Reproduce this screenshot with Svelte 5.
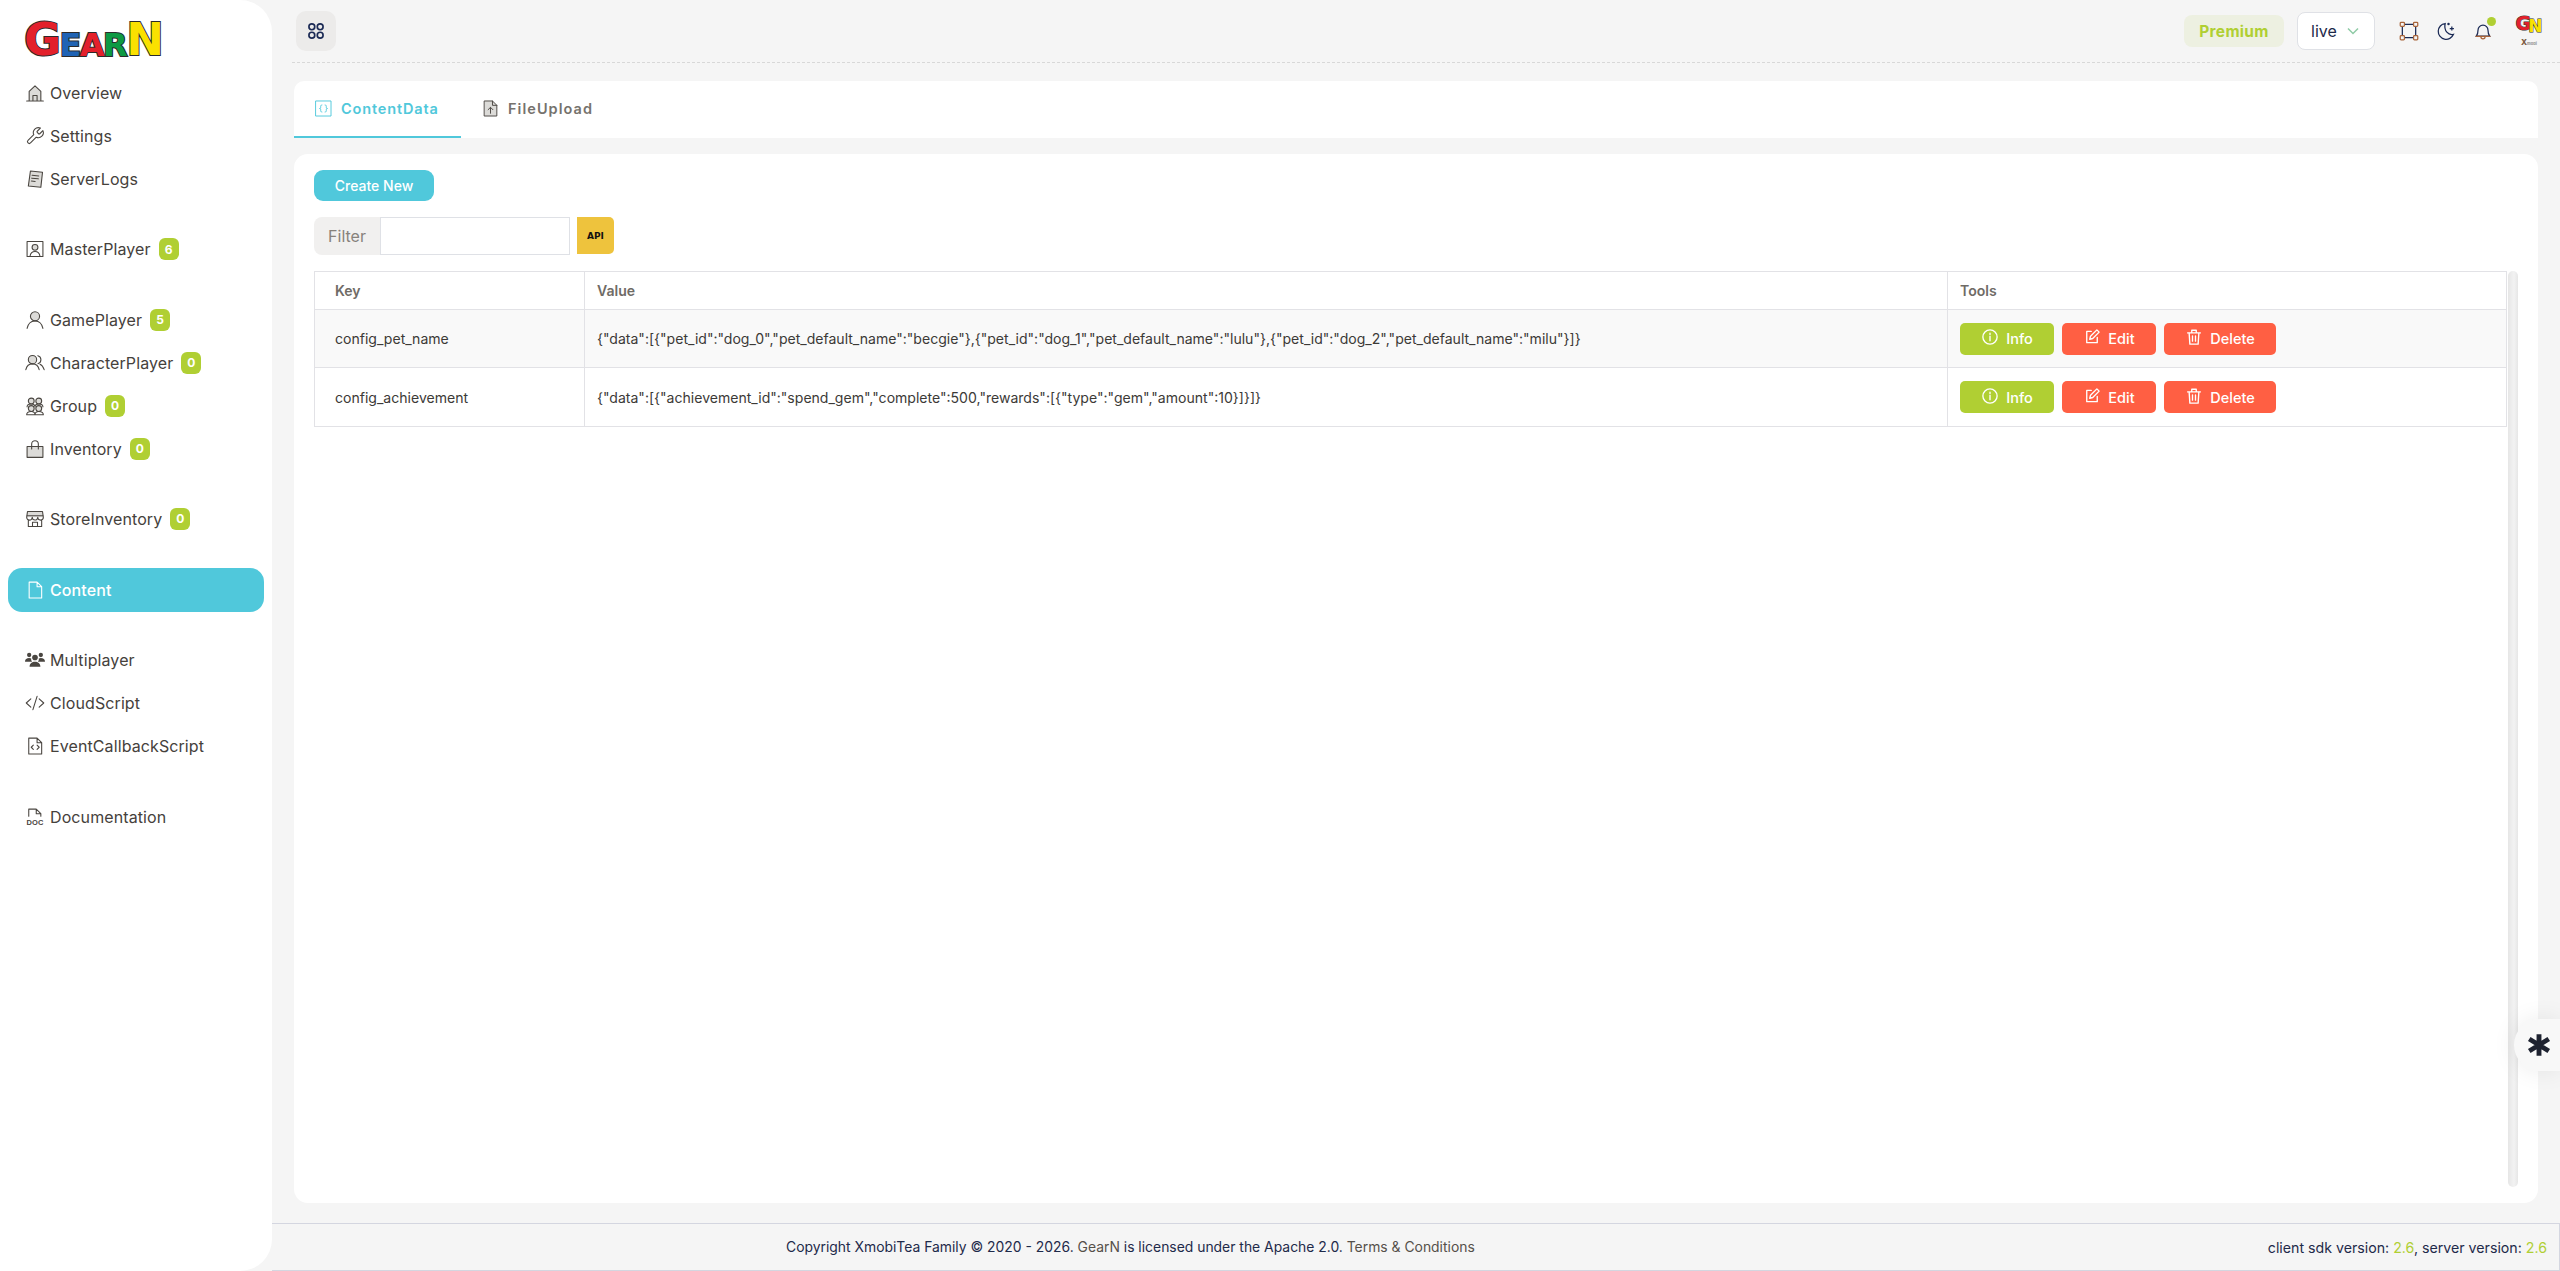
<script lang="ts">
	const icons: Record<string, string> = {
		home: '<path class="fill" d="M5 21V10l7-6.500L19 10v11z"/><path d="M2 21.500h20M5 21V10l7-6.500L19 10v11M9.500 21v-6h5v6"/>',
		wrench: '<path d="M14.700 6.300a1 1 0 0 0 0 1.400l1.600 1.600a1 1 0 0 0 1.400 0l3.770-3.770a6 6 0 0 1-7.940 7.940l-6.910 6.910a2.120 2.120 0 0 1-3-3l6.910-6.910a6 6 0 0 1 7.940-7.940z"/>',
		logs: '<path class="fill" d="M6.500 2.500 21 4l-2 18-15-1.500z"/><path d="M6.500 2.500 21 4l-2 18-15-1.500zM8.500 7.500l8 .8M8 11l8 .8M7.700 14.500l4.500.5"/>',
		master: '<rect x="2.500" y="3" width="19" height="18"/><circle class="fill" cx="12" cy="10" r="3.500"/><circle cx="12" cy="10" r="3.500"/><path d="M6 21c.5-4 3-6 6-6s5.500 2 6 6"/>',
		user: '<circle class="fill" cx="12" cy="7.500" r="5.500"/><circle cx="12" cy="7.500" r="5.500"/><path d="M2.500 22c1-5.500 5-9 9.500-9s8.500 3.500 9.500 9"/>',
		users: '<circle class="fill" cx="9" cy="8" r="5"/><circle cx="9" cy="8" r="5"/><path d="M1 20c1-4.500 4-7 8-7s7 2.500 8 7M15.500 3.200a5 5 0 0 1 0 9.600M18 13.500c2.500 1 4 3.500 5 6.500"/>',
		group: '<g class="fill"><circle cx="7.500" cy="6" r="3.500"/><circle cx="16.500" cy="6" r="3.500"/><circle cx="7.500" cy="15" r="3.500"/><circle cx="16.500" cy="15" r="3.500"/></g><circle cx="7.500" cy="6" r="3.500"/><circle cx="16.500" cy="6" r="3.500"/><circle cx="7.500" cy="15" r="3.500"/><circle cx="16.500" cy="15" r="3.500"/><path d="M2.500 13c0-2 2-3.500 5-3.500s4.500 1.500 4.500 3.500c0-2 1.500-3.500 4.500-3.500s5 1.500 5 3.500M2 22.500c0-2.500 2-4 5.500-4s4.500 1.500 4.500 4c0-2.500 1-4 4.500-4s5.500 1.500 5.500 4z"/>',
		bag: '<path class="fill" d="M2.500 9h19v13h-19z"/><path d="M2.500 9h19v13h-19zM8 12V6a4 4 0 0 1 8 0v6"/>',
		store: '<path class="fill" d="M3 3h18l1 7H2z"/><path d="M3 3h18l1 7a3.300 3.300 0 0 1-6.700 0 3.300 3.300 0 0 1-6.600 0A3.300 3.300 0 0 1 2 10zM2 8h20M4 13v8h16v-8M9 21v-5h6v5"/>',
		file: '<path d="M5 2.500h9.500L20 8v13.500H5zM14.500 2.500V8H20"/>',
		code: '<path d="M7 7l-5.500 5L7 17M17 7l5.500 5L17 17M14.500 4l-5 16"/>',
		filecode: '<path d="M4.500 2.500h10L20 8v13.500H4.500zM14.500 2.500V8H20M10 11l-2.500 2.500L10 16M14.500 11l2.500 2.500-2.500 2.500"/>',
		grid: '<circle cx="7" cy="7" r="3.500"/><circle cx="17" cy="7" r="3.500"/><circle cx="7" cy="17" r="3.500"/><circle cx="17" cy="17" r="3.500"/>',
		braces: '<rect x="2.500" y="2.500" width="19" height="19"/><path d="M10 7.500c-2 0-1.500 1.500-1.500 3 0 1-.5 1.500-1.500 1.500 1 0 1.500.5 1.500 1.500 0 1.500-.5 3 1.500 3M14 7.500c2 0 1.500 1.500 1.500 3 0 1 .5 1.500 1.500 1.500-1 0-1.500.5-1.500 1.500 0 1.500.5 3-1.500 3"/>',
		upload: '<path class="fill" d="M4.500 2.500h10L20 8v13.500H4.500z"/><path d="M4.500 2.500h10L20 8v13.500H4.500zM14.500 2.500V8H20M12 18v-7M9 13.500l3-3 3 3"/>',
		info: '<circle cx="12" cy="12" r="9.500"/><path d="M12 11v6M12 7v1.500"/>',
		edit: '<path d="M11 4.500H5v15h14v-7M9 15l1-4 8.500-8.500 3 3L13 14z"/>',
		trash: '<path d="M3.500 6.500h17M9 6.500V3h6v3.500M5.500 6.500l1 15h11l1-15M10 10.500v7M14 10.500v7"/>'
	};

	const groups = [
		[
			{ label: 'Overview', icon: 'home' },
			{ label: 'Settings', icon: 'wrench' },
			{ label: 'ServerLogs', icon: 'logs' }
		],
		[{ label: 'MasterPlayer', icon: 'master', badge: 6 }],
		[
			{ label: 'GamePlayer', icon: 'user', badge: 5 },
			{ label: 'CharacterPlayer', icon: 'users', badge: 0 },
			{ label: 'Group', icon: 'group', badge: 0 },
			{ label: 'Inventory', icon: 'bag', badge: 0 }
		],
		[{ label: 'StoreInventory', icon: 'store', badge: 0 }],
		[{ label: 'Content', icon: 'file', active: true }],
		[
			{ label: 'Multiplayer', icon: 'multi' },
			{ label: 'CloudScript', icon: 'code' },
			{ label: 'EventCallbackScript', icon: 'filecode' }
		],
		[{ label: 'Documentation', icon: 'doc' }]
	];

	const rows = [
		{
			key: 'config_pet_name',
			value: '{"data":[{"pet_id":"dog_0","pet_default_name":"becgie"},{"pet_id":"dog_1","pet_default_name":"lulu"},{"pet_id":"dog_2","pet_default_name":"milu"}]}'
		},
		{
			key: 'config_achievement',
			value: '{"data":[{"achievement_id":"spend_gem","complete":500,"rewards":[{"type":"gem","amount":10}]}]}'
		}
	];
</script>

{#snippet icon(name: string, cls = '')}
	<svg class="icon {cls}" viewBox="0 0 24 24" aria-hidden="true">{@html icons[name]}</svg>
{/snippet}

<div class="shell">
	<aside class="sidebar">
		<div class="logo"><span class="red big">G</span><span class="blue">E</span><span class="red">A</span><span class="green">R</span><span class="yellow big">N</span></div>
		<nav>
			{#each groups as group}
				<ul class="group">
					{#each group as item}
						<li class="item" class:active={item.active}>
							{#if item.icon === 'multi'}
								<svg class="icon solid" viewBox="0 0 24 20" aria-hidden="true">
									<circle cx="5" cy="4" r="2.600" /><circle cx="19" cy="4" r="2.600" /><circle cx="12" cy="7" r="3.400" />
									<path d="M0 12c0-3 2-4.500 5-4.500 1 0 1.800.2 2.500.6-.4 1.500.2 3 1 3.900H0zM24 12c0-3-2-4.500-5-4.500-1 0-1.800.2-2.500.6.400 1.500-.2 3-1 3.900H24zM5.500 18c0-4 3-6 6.500-6s6.500 2 6.500 6z" />
								</svg>
							{:else if item.icon === 'doc'}
								<svg class="icon" viewBox="0 0 24 24" aria-hidden="true">
									<path d="M4.500 11V2.500h9L19 8v3M13.500 2.500V8H19" />
									<text x="12" y="22" text-anchor="middle" class="doc">DOC</text>
								</svg>
							{:else}
								{@render icon(item.icon)}
							{/if}
							<span class="label">{item.label}</span>
							{#if item.badge !== undefined}
								<span class="badge">{item.badge}</span>
							{/if}
						</li>
					{/each}
				</ul>
			{/each}
		</nav>
	</aside>

	<div class="main">
		<header class="topbar">
			<button class="menu-btn">{@render icon('grid', 'navy')}</button>
			<div class="top-right">
				<span class="premium">Premium</span>
				<div class="env">
					<span>live</span>
					<svg class="chev" viewBox="0 0 12 8" aria-hidden="true"><path d="M1 1.500l5 5 5-5" /></svg>
				</div>
				<svg class="top-icon" viewBox="0 0 24 24" aria-hidden="true">
					<path class="navy-line" d="M6.500 4h11M6.500 20h11M4 6.500v11M20 6.500v11" />
					<g class="orange-line"><rect x="1.500" y="1.500" width="5" height="5" rx="1" /><rect x="17.500" y="1.500" width="5" height="5" rx="1" /><rect x="1.500" y="17.500" width="5" height="5" rx="1" /><rect x="17.500" y="17.500" width="5" height="5" rx="1" /></g>
				</svg>
				<svg class="top-icon" viewBox="0 0 24 24" aria-hidden="true">
					<path class="navy-line" d="M11 3a9.500 9.500 0 1 0 10 13c-6 1.500-12-4-10-13z" />
					<path class="navy-line" d="M19 6.500v5M16.500 9h5" />
					<circle cx="15" cy="3.500" r="1.500" fill="#1b2a55" />
				</svg>
				<div class="bell">
					<svg class="top-icon" viewBox="0 0 24 24" aria-hidden="true">
						<path class="navy-line" d="M4 18c1.500-2 2-3.500 2-7a6 6 0 0 1 12 0c0 3.500.5 5 2 7z" />
						<path class="orange-line" d="M3 18.500h18M9.500 19a2.500 2.500 0 0 0 5 0" />
					</svg>
					<span class="dot"></span>
				</div>
				<div class="avatar">
					<div class="avatar-letters"><span class="g">G</span><span class="n">N</span></div>
					<div class="avatar-sub">X<small>mobi</small></div>
				</div>
			</div>
		</header>

		<div class="tabs">
			<div class="tab on">{@render icon('braces')}<span>ContentData</span></div>
			<div class="tab">{@render icon('upload')}<span>FileUpload</span></div>
		</div>

		<section class="card">
			<button class="create">Create New</button>
			<div class="filter-row">
				<div class="filter">
					<span class="filter-label">Filter</span>
					<input class="filter-input" type="text" />
				</div>
				<button class="api">API</button>
			</div>
			<div class="table-area">
				<div class="table-wrap">
					<table>
						<thead>
							<tr><th class="c-key">Key</th><th class="c-val">Value</th><th class="c-tools">Tools</th></tr>
						</thead>
						<tbody>
							{#each rows as row}
								<tr>
									<td class="c-key">{row.key}</td>
									<td class="c-val">{row.value}</td>
									<td class="c-tools">
										<div class="tools">
											<button class="btn lime">{@render icon('info')}Info</button>
											<button class="btn coral">{@render icon('edit')}Edit</button>
											<button class="btn coral wide">{@render icon('trash')}Delete</button>
										</div>
									</td>
								</tr>
							{/each}
						</tbody>
					</table>
				</div>
				<div class="scroll-thumb"></div>
			</div>
		</section>

		<footer class="footer">
			<div class="copy">Copyright XmobiTea Family © 2020 - 2026. <span class="soft">GearN</span> is licensed under the Apache 2.0. <span class="soft">Terms &amp; Conditions</span></div>
			<div class="versions">client sdk version: <b>2.6</b>, server version: <b>2.6</b></div>
		</footer>
	</div>

	<button class="float" aria-label="assistant">
		<svg viewBox="0 0 24 24" aria-hidden="true"><path d="M12 2v20M3 6.500l18 11M3 17.500l18-11" /></svg>
	</button>
</div>

<style>
	:global(body) {
		margin: 0;
		background: #f5f5f5;
		font-family: Inter, "Noto Sans", sans-serif;
	}

	.shell {
		display: grid;
		grid-template-columns: 272px 1fr;
		height: 1271px;
		overflow: hidden;
		color: #45413c;
	}

	.sidebar {
		background: #fff;
		border-radius: 0 32px 32px 0;
		padding: 24px 8px 0;
		box-sizing: border-box;
	}

	.logo {
		display: flex;
		align-items: flex-end;
		height: 34px;
		padding-left: 16px;
		margin-bottom: 13.500px;
		font-family: "DejaVu Sans", sans-serif;
		font-weight: 700;
		font-size: 32px;
		line-height: 26px;
		-webkit-text-stroke: 2px #2b2b2b;
		paint-order: stroke fill;
	}

	.logo span {
		display: block;
		margin-right: -1.500px;
	}

	.logo .big {
		font-size: 45px;
		line-height: 36px;
	}

	.red { color: #e3202b; }
	.blue { color: #1f63b5; }
	.green { color: #0d9a44; }
	.yellow { color: #fae100; }

	nav {
		display: flex;
		flex-direction: column;
		gap: 27.250px;
	}

	.group {
		list-style: none;
		margin: 0;
		padding: 0;
	}

	.item {
		display: flex;
		align-items: center;
		height: 43px;
		padding-left: 17px;
		font-size: 16px;
		letter-spacing: 0.1px;
	}

	.item .icon {
		width: 20px;
		height: 20px;
		margin-right: 5px;
		flex: none;
	}

	.item.active {
		height: 44px;
		background: #50c8db;
		color: #fff;
		font-weight: 500;
		border-radius: 14px;
	}

	.item.active .icon :global(path) {
		stroke: #fff;
	}

	.badge {
		display: flex;
		align-items: center;
		justify-content: center;
		width: 20px;
		height: 22px;
		margin-left: 8px;
		border-radius: 6px;
		background: #b0cf33;
		color: #fff;
		font-size: 12px;
		font-weight: 700;
		letter-spacing: 0;
	}

	.icon {
		fill: none;
		stroke: #4a4641;
		stroke-width: 1.300;
		stroke-linejoin: round;
		stroke-linecap: round;
	}

	.icon :global(.fill) {
		fill: #dcdbd8;
		stroke: none;
	}

	.icon.solid {
		fill: #4a4641;
		stroke: none;
	}

	.doc {
		font-family: "Liberation Sans", sans-serif;
		font-size: 9px;
		font-weight: 700;
		fill: #4a4641;
		stroke: none;
	}

	.main {
		display: flex;
		flex-direction: column;
		min-width: 0;
		height: 1271px;
	}

	.topbar {
		display: flex;
		align-items: center;
		justify-content: space-between;
		box-sizing: border-box;
		height: 63px;
		margin-left: 20px;
		margin-bottom: 18px;
		padding: 0 16px 0 4px;
		border-bottom: 1px dashed #d8d8d8;
		flex: none;
	}

	.menu-btn {
		display: flex;
		align-items: center;
		justify-content: center;
		width: 40px;
		height: 40px;
		padding: 0;
		border: none;
		border-radius: 10px;
		background: #ecebea;
	}

	.menu-btn .icon {
		width: 20px;
		height: 20px;
		stroke: #1b2a55;
		stroke-width: 2;
	}

	.top-right {
		display: flex;
		align-items: center;
	}

	.premium {
		display: flex;
		align-items: center;
		justify-content: center;
		width: 100px;
		height: 32px;
		margin-right: 13px;
		border-radius: 8px;
		background: #edf0e1;
		color: #b0cf33;
		font-size: 15.500px;
		font-weight: 700;
		letter-spacing: 0.3px;
	}

	.env {
		display: flex;
		align-items: center;
		justify-content: space-between;
		box-sizing: border-box;
		width: 78px;
		height: 38px;
		margin-right: 24px;
		padding: 0 15px 0 13px;
		border: 1px solid #dfe1e6;
		border-radius: 8px;
		background: #fff;
		color: #1e2a4a;
		font-size: 16px;
	}

	.chev {
		width: 12px;
		height: 8px;
		fill: none;
		stroke: #8fcba6;
		stroke-width: 1.500;
	}

	.top-icon {
		display: block;
		width: 20px;
		height: 20px;
		margin-right: 17px;
		fill: none;
	}

	.navy-line {
		fill: none;
		stroke: #1b2a55;
		stroke-width: 1.500;
	}

	.orange-line {
		fill: none;
		stroke: #a8643a;
		stroke-width: 1.500;
	}

	.bell {
		position: relative;
	}

	.dot {
		position: absolute;
		top: -4px;
		right: 14px;
		width: 9px;
		height: 9px;
		border-radius: 50%;
		background: #b0cf33;
	}

	.avatar {
		width: 32px;
		margin-left: 3px;
		margin-right: -1px;
		text-align: center;
	}

	.avatar-letters {
		display: flex;
		justify-content: center;
		font-family: "DejaVu Sans", sans-serif;
		font-weight: 700;
		font-size: 19px;
		line-height: 18px;
		-webkit-text-stroke: 1px #333;
		paint-order: stroke fill;
	}

	.avatar-letters .g { color: #e3202b; }
	.avatar-letters .n { color: #fae100; margin-left: -3px; margin-top: 3px; font-size: 17px; }

	.avatar-sub {
		font-size: 8px;
		line-height: 8px;
		margin-top: 3px;
		font-weight: 800;
		color: #7b5a3d;
	}

	.avatar-sub small {
		font-size: 4px;
		color: #999;
	}

	.tabs {
		display: flex;
		flex: none;
		height: 57px;
		margin: 0 22px;
		background: #fff;
		border-radius: 10px 10px 0 0;
	}

	.tab {
		display: flex;
		align-items: center;
		gap: 8px;
		box-sizing: border-box;
		padding: 0 20px 3px;
		color: #76726d;
		font-size: 14.500px;
		font-weight: 600;
		letter-spacing: 1.050px;
	}

	.tab .icon {
		width: 19px;
		height: 19px;
		stroke-width: 1.200;
	}

	.tab.on {
		width: 167px;
		color: #50c8db;
		border-bottom: 2px solid #50c8db;
		padding-bottom: 1px;
		letter-spacing: 0.85px;
	}

	.tab.on .icon {
		stroke: #50c8db;
	}

	.card {
		display: flex;
		flex-direction: column;
		flex: 1;
		min-height: 0;
		box-sizing: border-box;
		margin: 16px 22px 20px;
		padding: 16px 20px 16px;
		background: #fff;
		border-radius: 14px;
	}

	.create {
		flex: none;
		width: 120px;
		height: 31px;
		padding: 0;
		border: none;
		border-radius: 9px;
		background: #50c8db;
		color: #fff;
		font-family: inherit;
		font-size: 14px;
		font-weight: 500;
	}

	.filter-row {
		display: flex;
		align-items: flex-start;
		gap: 7px;
		margin: 16px 0;
	}

	.filter {
		display: flex;
		width: 256px;
		height: 38px;
	}

	.filter-label {
		display: flex;
		align-items: center;
		justify-content: center;
		width: 66px;
		border-radius: 8px 0 0 8px;
		background: #f1f0ef;
		color: #87827c;
		font-size: 16px;
	}

	.filter-input {
		flex: 1;
		min-width: 0;
		box-sizing: border-box;
		border: 1px solid #dfe1e6;
		background: #fff;
	}

	.api {
		width: 37px;
		height: 37px;
		padding: 0;
		border: none;
		border-radius: 0 5px 5px 0;
		background: #eec33d;
		color: #111;
		font-family: "DejaVu Sans", sans-serif;
		font-size: 9px;
		font-weight: 700;
	}

	.table-area {
		display: flex;
		flex: 1;
		min-height: 0;
		gap: 1px;
	}

	.table-wrap {
		flex: 1;
		min-width: 0;
	}

	table {
		width: 100%;
		table-layout: fixed;
		border-collapse: collapse;
		font-size: 14.050px;
		color: #3c3a37;
	}

	th,
	td {
		box-sizing: border-box;
		border: 1px solid #e2e2e6;
		text-align: left;
		white-space: nowrap;
	}

	th {
		height: 38px;
		color: #6f6b66;
		font-weight: 600;
	}

	tbody tr:nth-child(1) td {
		height: 58px;
		background: #f9f9f9;
	}

	tbody tr:nth-child(2) td {
		height: 59px;
	}

	.c-key {
		width: 270px;
		padding-left: 20px;
	}

	.c-val {
		padding-left: 12px;
	}

	.c-tools {
		width: 559px;
		padding-left: 12px;
	}

	.tools {
		display: flex;
		gap: 8px;
	}

	.btn {
		display: flex;
		align-items: center;
		justify-content: center;
		gap: 7px;
		width: 94px;
		height: 32px;
		padding: 0;
		border: none;
		border-radius: 5px;
		color: #fff;
		font-family: inherit;
		font-size: 14.500px;
		font-weight: 500;
	}

	.btn.wide {
		width: 112px;
	}

	.btn .icon {
		width: 18px;
		height: 18px;
		stroke: #fff;
		stroke-width: 1.800;
		margin-top: -3px;
	}

	.lime { background: #b0cf33; }
	.coral { background: #ff5f43; }

	.scroll-thumb {
		flex: none;
		width: 10px;
		border-radius: 5px;
		background: linear-gradient(90deg, #e6e6e6, #f2f2f2 60%, #e6e6e6);
	}

	.footer {
		display: flex;
		align-items: center;
		justify-content: space-between;
		flex: none;
		box-sizing: border-box;
		height: 48px;
		padding: 0 12px 0 514px;
		border: 1px solid #d4d6e0;
		border-width: 1px 1px 1px 0;
		font-size: 14.200px;
		color: #1e2a4a;
	}

	.copy {
		font-size: 13.900px;
	}

	.soft {
		color: #55504a;
	}

	.versions b {
		color: #b0cf33;
		font-weight: 400;
	}

	.float {
		position: fixed;
		top: 1019px;
		right: 0;
		width: 46px;
		height: 52px;
		padding: 0 0 0 3px;
		border: none;
		border-radius: 26px 0 0 26px;
		background: #f8f8f8;
		box-shadow: 0 0 24px rgba(0, 0, 0, 0.08);
	}

	.float svg {
		display: block;
		width: 26px;
		height: 26px;
		margin: 0 auto;
		fill: none;
		stroke: #1e2230;
		stroke-width: 4.500;
	}
</style>
